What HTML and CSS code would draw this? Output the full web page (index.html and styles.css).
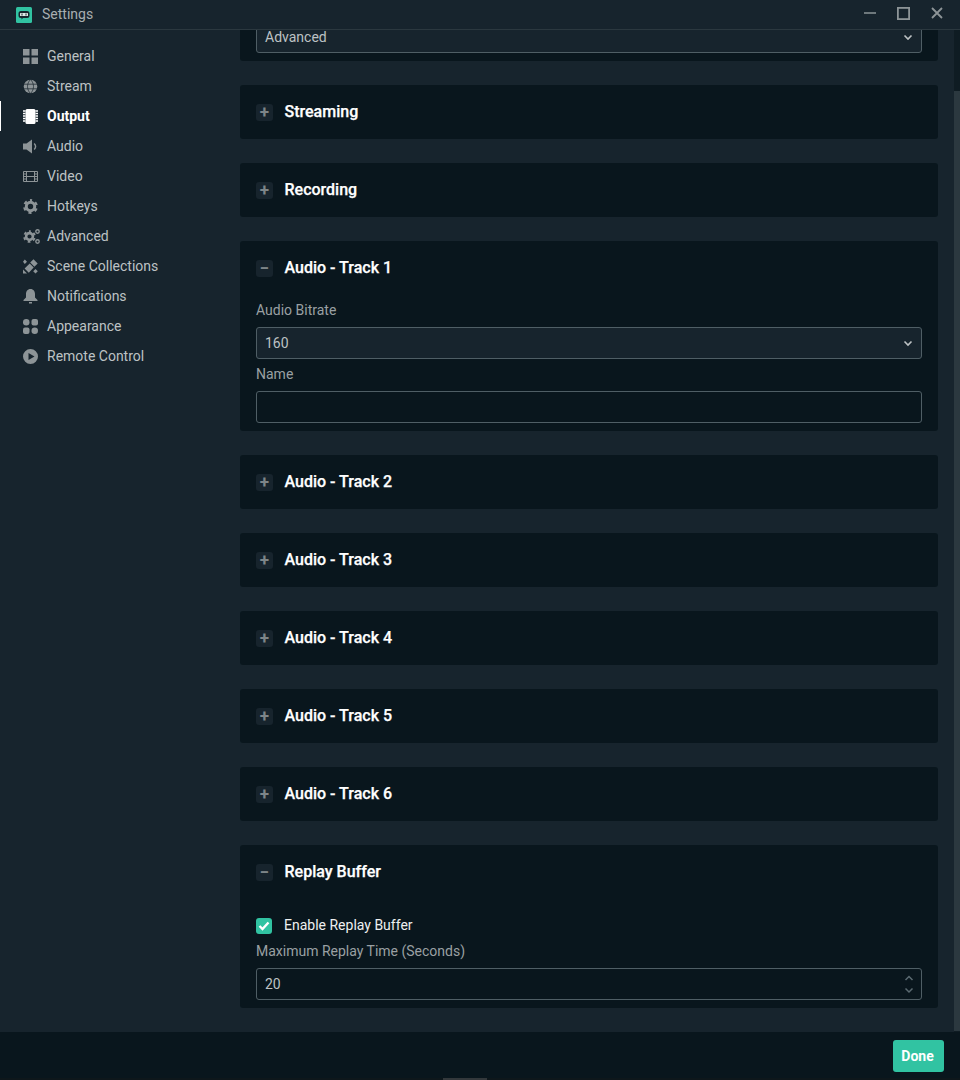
FILE: index.html
```html
<!DOCTYPE html>
<html lang="en">
<head>
    <meta charset="UTF-8">
    <title>Settings</title>
    <link rel="stylesheet" href="styles.css">
</head>
<body>
    <div class="titlebar">
        <svg class="app-logo" width="16" height="16" viewBox="0 0 16 16">
            <rect width="16" height="16" rx="1.5" fill="#31c3a2"/>
            <path d="M5 4h6a2.5 2.5 0 0 1 2.5 2.5v2A2.5 2.5 0 0 1 11 11H7l-1.5 1.5V11H5a2.500 2.500 0 0 1-2.500-2.500v-2A2.500 2.500 0 0 1 5 4z" fill="#17242d"/>
            <rect x="4" y="6" width="8" height="3" rx=".5" fill="#dfe9e6"/>
            <path d="M6 6.500v2M10 6.500v2" stroke="#17242d" stroke-width="1"/>
        </svg>
        <span class="title">Settings</span>
        <div class="window-btns">
            <svg width="12" height="12" viewBox="0 0 12 12"><path d="M0 6h12" stroke="#8d9497" stroke-width="1.500"/></svg>
            <svg width="13" height="13" viewBox="0 0 13 13"><rect x=".9" y=".9" width="11.200" height="11.200" fill="none" stroke="#8d9497" stroke-width="1.800"/></svg>
            <svg width="12" height="12" viewBox="0 0 12 12"><path d="M1 1l10 10M11 1L1 11" stroke="#8d9497" stroke-width="1.800"/></svg>
        </div>
    </div>

    <div class="middle">
        <nav class="sidebar">
            <a class="nav-item">
                <svg class="nav-icon" viewBox="0 0 15 15"><path d="M0 0h6.500v6.500H0zM8.500 0H15v6.500H8.500zM0 8.500h6.500V15H0zM8.500 8.500H15V15H8.500z"/></svg>
                General
            </a>
            <a class="nav-item">
                <svg class="nav-icon" viewBox="0 0 15 15"><circle cx="7.500" cy="7.500" r="6.800"/><path d="M.5 5.200h14M.5 9.800h14M7.500 .5c-4 4-4 10 0 14M7.500 .5c4 4 4 10 0 14" fill="none" stroke="#17242d" stroke-width=".7"/></svg>
                Stream
            </a>
            <a class="nav-item active">
                <svg class="nav-icon" viewBox="0 0 15 15"><rect x="2.500" y="0" width="10" height="15" rx="1.500"/><path d="M0 2h2.500M0 4.500h2.500M0 7h2.500M0 9.500h2.500M0 12h2.500M12.500 2H15M12.500 4.500H15M12.500 7H15M12.500 9.500H15M12.500 12H15" stroke="#fff" stroke-width="1.300"/></svg>
                Output
            </a>
            <a class="nav-item">
                <svg class="nav-icon" viewBox="0 0 15 15"><path d="M0 4.500h3.500L9 .5v14l-5.500-4H0z"/><path d="M11.200 4.500c1.600 1.700 1.600 4.300 0 6" fill="none" stroke="#8d9497" stroke-width="1.400"/></svg>
                Audio
            </a>
            <a class="nav-item">
                <svg class="nav-icon" viewBox="0 0 15 15"><path d="M.5 2.500h14v10H.5zM3.500 2.500v10M11.500 2.500v10M3.500 7.500h8M.5 5h3M.5 7.500h3M.5 10h3M11.500 5h3M11.500 7.500h3M11.500 10h3" fill="none" stroke="#8d9497" stroke-width="1"/></svg>
                Video
            </a>
            <a class="nav-item">
                <svg class="nav-icon" viewBox="0 0 15 15"><circle cx="7.500" cy="7.500" r="4.200" fill="none" stroke="#8d9497" stroke-width="3"/><circle cx="7.500" cy="7.500" r="6.300" fill="none" stroke="#8d9497" stroke-width="2.200" stroke-dasharray="3.200 3.400" stroke-dashoffset="1.600" transform="rotate(-90 7.500 7.500)"/></svg>
                Hotkeys
            </a>
            <a class="nav-item">
                <svg class="nav-icon wide" viewBox="0 0 17 15"><circle cx="6.500" cy="7.500" r="3.400" fill="none" stroke="#8d9497" stroke-width="2.600"/><circle cx="6.500" cy="7.500" r="5.300" fill="none" stroke="#8d9497" stroke-width="2" stroke-dasharray="2.700 2.850" stroke-dashoffset="1.350" transform="rotate(-90 6.500 7.500)"/><circle cx="14.500" cy="2.500" r="1.700" fill="none" stroke="#8d9497" stroke-width="1.400"/><circle cx="14.500" cy="12.500" r="1.700" fill="none" stroke="#8d9497" stroke-width="1.400"/></svg>
                Advanced
            </a>
            <a class="nav-item">
                <svg class="nav-icon" viewBox="0 0 15 15"><path d="M10.500 .3l4.200 4.200-3.300 3.300-4.200-4.200zM6.700 4.600l4 4-4.900 5.200L1.600 9.600zM1.800 .5l2.200 2.200-2.200 2.200L0 2.700zM12.500 10l2.300 2.300-2.300 2.300-2.300-2.300zM0 10.500l4 4H0z"/></svg>
                Scene Collections
            </a>
            <a class="nav-item">
                <svg class="nav-icon" viewBox="0 0 15 15"><path d="M7.500 0C4.500 0 3 2.500 3 5v3.500L.5 11v1h14v-1L12 8.500V5c0-2.500-1.500-5-4.500-5zM6 13h3v1.500H6z"/></svg>
                Notifications
            </a>
            <a class="nav-item">
                <svg class="nav-icon" viewBox="0 0 15 15"><rect x="0" y="0" width="6.500" height="6.500" rx="3.200"/><rect x="8.500" y="0" width="6.500" height="6.500" rx="2"/><rect x="0" y="8.500" width="6.500" height="6.500" rx="2"/><rect x="8.500" y="8.500" width="6.500" height="6.500" rx="3.200"/></svg>
                Appearance
            </a>
            <a class="nav-item">
                <svg class="nav-icon" viewBox="0 0 15 15"><path fill-rule="evenodd" d="M7.500 0a7.500 7.500 0 1 1 0 15 7.500 7.500 0 0 1 0-15zM5.500 4v7l6-3.500z"/></svg>
                Remote Control
            </a>
        </nav>

        <main class="content">
            <section class="panel panel-top">
                <div class="select cut-off">Advanced <svg class="chevron" width="10" height="7" viewBox="0 0 10 7"><path d="M1.500 1.500L5 5l3.500-3.500" fill="none" stroke="#bdc2c4" stroke-width="1.600"/></svg></div>
            </section>

            <section class="panel">
                <div class="panel-header"><span class="toggle">+</span><h2>Streaming</h2></div>
            </section>
            <section class="panel">
                <div class="panel-header"><span class="toggle">+</span><h2>Recording</h2></div>
            </section>

            <section class="panel">
                <div class="panel-header"><span class="toggle minus">&minus;</span><h2>Audio - Track 1</h2></div>
                <div class="panel-body">
                    <label class="field-label">Audio Bitrate</label>
                    <div class="select">160 <svg class="chevron" width="10" height="7" viewBox="0 0 10 7"><path d="M1.500 1.500L5 5l3.500-3.500" fill="none" stroke="#bdc2c4" stroke-width="1.600"/></svg></div>
                    <label class="field-label next">Name</label>
                    <div class="input"></div>
                </div>
            </section>

            <section class="panel">
                <div class="panel-header"><span class="toggle">+</span><h2>Audio - Track 2</h2></div>
            </section>
            <section class="panel">
                <div class="panel-header"><span class="toggle">+</span><h2>Audio - Track 3</h2></div>
            </section>
            <section class="panel">
                <div class="panel-header"><span class="toggle">+</span><h2>Audio - Track 4</h2></div>
            </section>
            <section class="panel">
                <div class="panel-header"><span class="toggle">+</span><h2>Audio - Track 5</h2></div>
            </section>
            <section class="panel">
                <div class="panel-header"><span class="toggle">+</span><h2>Audio - Track 6</h2></div>
            </section>

            <section class="panel">
                <div class="panel-header"><span class="toggle minus">&minus;</span><h2>Replay Buffer</h2></div>
                <div class="panel-body">
                    <div class="check-row">
                        <span class="checkbox">
                            <svg width="12" height="10" viewBox="0 0 12 10"><path d="M1.500 5l3 3 6-6.500" fill="none" stroke="#fff" stroke-width="2.400"/></svg>
                        </span>
                        <span class="check-label">Enable Replay Buffer</span>
                    </div>
                    <label class="field-label">Maximum Replay Time (Seconds)</label>
                    <div class="input">20
                        <svg class="spinner" width="10" height="20" viewBox="0 0 10 20"><path d="M1.500 6L5 2.500 8.500 6M1.500 14.500L5 18l3.500-3.500" fill="none" stroke="#5b6a71" stroke-width="1.500"/></svg>
                    </div>
                </div>
            </section>
        </main>

        <div class="scrollbar"><div class="scroll-thumb"></div></div>
    </div>

    <footer class="footer">
        <button class="done-btn">Done</button>
    </footer>
    <div class="bottom-strip"><div class="strip-handle"></div></div>
</body>
</html>
```

FILE: styles.css
```css
* {
    margin: 0;
    padding: 0;
    box-sizing: border-box;
}

body {
    font-family: Roboto, sans-serif;
    font-size: 14px;
    background-color: #17242d;
    color: #bdc2c4;
    width: 960px;
    height: 1080px;
    overflow: hidden;
    display: flex;
    flex-direction: column;
}

.titlebar {
    height: 30px;
    flex-shrink: 0;
    display: flex;
    align-items: center;
    padding-left: 16px;
    border-bottom: 1px solid #2b383f;
}

.app-logo {
    margin-right: 10px;
}

.title {
    color: #a8aeb1;
    margin-top: -2px;
}

.window-btns {
    margin-left: auto;
    display: flex;
    align-items: center;
    gap: 21px;
    padding-right: 17px;
    margin-top: -3px;
}

.middle {
    flex: 1;
    display: flex;
    min-height: 0;
}

.sidebar {
    width: 240px;
    flex-shrink: 0;
    padding-top: 11px;
}

.nav-item {
    height: 30px;
    display: flex;
    align-items: center;
    gap: 9px;
    padding-left: 23px;
    color: #bdc2c4;
}

.nav-icon {
    width: 15px;
    height: 15px;
    fill: #8d9497;
    overflow: visible;
}

.nav-icon.wide {
    width: 17px;
    margin-right: -2px;
}

.nav-item.active {
    color: #fff;
    font-weight: 700;
    box-shadow: inset 1px 0 0 #fff;
}

.nav-item.active .nav-icon {
    fill: #fff;
}

.content {
    width: 698px;
    flex-shrink: 0;
    overflow: hidden;
}

.panel {
    background: #09161d;
    border-radius: 3px;
    margin-bottom: 24px;
}

.panel-top {
    height: 31px;
    padding: 0 16px;
    border-radius: 0 0 3px 3px;
    overflow: hidden;
}

.select.cut-off {
    margin-top: -9px;
}

.panel-header {
    height: 54px;
    display: flex;
    align-items: center;
    padding-left: 16px;
}

.panel-header h2 {
    font-size: 16px;
    font-weight: 500;
    color: #fff;
    margin-top: -2px;
    -webkit-text-stroke: 0.25px #fff;
}

.toggle {
    width: 17px;
    height: 17px;
    margin-right: 11.5px;
    background: #17242d;
    border-radius: 3px;
    color: #7d8588;
    font-size: 17px;
    font-weight: 700;
    line-height: 17px;
    text-align: center;
}

.panel-body {
    padding: 6px 16px 8px;
}

.field-label {
    display: block;
    height: 18px;
    line-height: 18px;
    margin-bottom: 8px;
    color: #9aa0a3;
}

.field-label.next {
    margin-top: 6px;
}

.select,
.input {
    height: 32px;
    border: 1px solid #4f5e65;
    border-radius: 3px;
    display: flex;
    align-items: center;
    justify-content: space-between;
    padding: 0 8px;
}

.select {
    background: #17242d;
}

.spinner {
    margin-right: -1px;
}

.check-row {
    height: 18px;
    margin: 12px 0 7px;
    display: flex;
    align-items: center;
    gap: 12px;
}

.check-label {
    color: #eef0f0;
    margin-top: -2px;
}

.checkbox {
    width: 16px;
    height: 16px;
    background: #31c3a2;
    border-radius: 3px;
    display: flex;
    align-items: center;
    justify-content: center;
}

.scrollbar {
    width: 6px;
    margin-left: 16px;
    background: #0f1c23;
}

.scroll-thumb {
    height: 940px;
    margin-top: 61px;
    background: #2b383f;
}

.footer {
    height: 46px;
    flex-shrink: 0;
    background: #09161d;
    display: flex;
    align-items: center;
    justify-content: flex-end;
    padding: 2px 16px 0 0;
}

.done-btn {
    width: 51px;
    height: 32px;
    border: none;
    border-radius: 3px;
    background: #31c3a2;
    color: #fff;
    font-family: inherit;
    font-size: 14px;
    font-weight: 700;
    padding-right: 2px;
}

.bottom-strip {
    height: 2px;
    flex-shrink: 0;
    background: #0e171b;
    padding-left: 443px;
}

.strip-handle {
    width: 44px;
    height: 2px;
    background: #33383b;
}
```
